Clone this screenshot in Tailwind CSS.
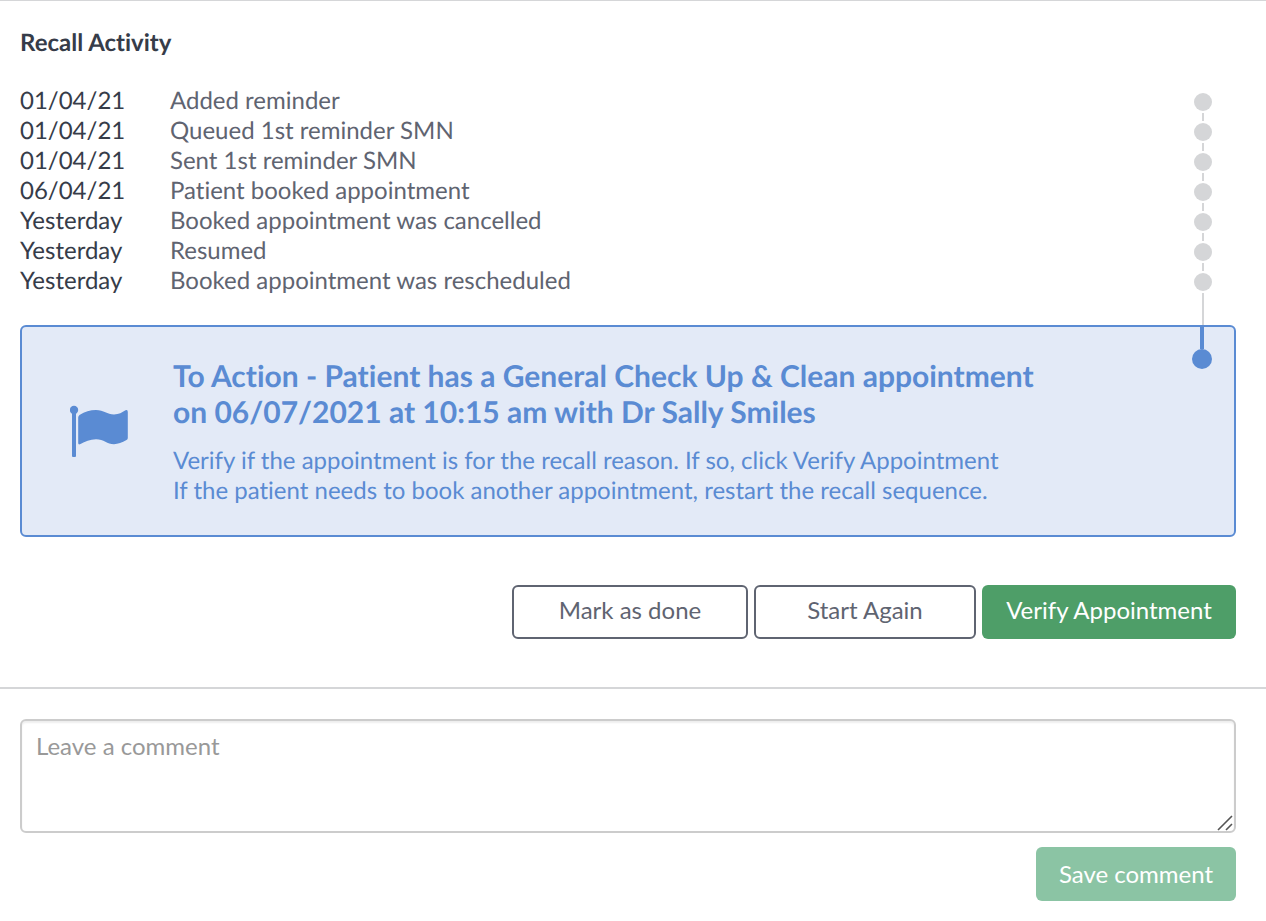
<!DOCTYPE html>
<html lang="en">
<head>
<meta charset="utf-8">
<meta name="viewport" content="width=device-width, initial-scale=1">
<title>Recall Activity</title>
<script src="https://cdn.jsdelivr.net/npm/@tailwindcss/browser@4"></script>
</head>
<body class="bg-white font-['Lato',sans-serif] text-2xl leading-[30px] text-[#5f6471] antialiased [font-variant-ligatures:none] [text-rendering:geometricPrecision]">
<main class="border-t border-[#d5d6d8]">
  <section class="pt-[27px] pr-[30px] pb-12 pl-5">
    <h1 class="font-bold text-[#363c49]">Recall Activity</h1>

    <div class="mt-7 flex">
      <ol class="min-w-0 flex-1 pb-[29px]">
        <li class="flex"><time class="w-[150px] shrink-0 text-[#363c49]">01/04/21</time><span>Added reminder</span></li>
        <li class="flex"><time class="w-[150px] shrink-0 text-[#363c49]">01/04/21</time><span>Queued 1st reminder SMN</span></li>
        <li class="flex"><time class="w-[150px] shrink-0 text-[#363c49]">01/04/21</time><span>Sent 1st reminder SMN</span></li>
        <li class="flex"><time class="w-[150px] shrink-0 text-[#363c49]">06/04/21</time><span>Patient booked appointment</span></li>
        <li class="flex"><time class="w-[150px] shrink-0 text-[#363c49]">Yesterday</time><span>Booked appointment was cancelled</span></li>
        <li class="flex"><time class="w-[150px] shrink-0 text-[#363c49]">Yesterday</time><span>Resumed</span></li>
        <li class="flex"><time class="w-[150px] shrink-0 text-[#363c49]">Yesterday</time><span>Booked appointment was rescheduled</span></li>
      </ol>
      <!-- Timeline -->
      <div class="mr-6 flex flex-col items-center gap-[2px] pt-[7px]" aria-hidden="true">
        <i class="size-[18px] rounded-full bg-[#d5d6d8]"></i><i class="h-2 w-[2px] bg-[#d5d6d8]"></i>
        <i class="size-[18px] rounded-full bg-[#d5d6d8]"></i><i class="h-2 w-[2px] bg-[#d5d6d8]"></i>
        <i class="size-[18px] rounded-full bg-[#d5d6d8]"></i><i class="h-2 w-[2px] bg-[#d5d6d8]"></i>
        <i class="size-[18px] rounded-full bg-[#d5d6d8]"></i><i class="h-2 w-[2px] bg-[#d5d6d8]"></i>
        <i class="size-[18px] rounded-full bg-[#d5d6d8]"></i><i class="h-2 w-[2px] bg-[#d5d6d8]"></i>
        <i class="size-[18px] rounded-full bg-[#d5d6d8]"></i><i class="h-2 w-[2px] bg-[#d5d6d8]"></i>
        <i class="size-[18px] rounded-full bg-[#d5d6d8]"></i><i class="w-[2px] flex-1 bg-[#d5d6d8]"></i>
      </div>
    </div>

    <div class="flex rounded-md border-2 border-[#5a8bd3] bg-[#e3eaf7] pr-[22px] pl-12 text-[#5a8bd3]">
      <svg class="mr-11 h-[52px] w-[59px] shrink-0 self-center" viewBox="0 0 59 52" fill="currentColor" aria-hidden="true">
        <circle cx="4" cy="5" r="4.2"/>
        <rect x="2" y="5" width="4" height="47" rx="1"/>
        <path d="M8.2 12.5Q8.200 11 9.500 10C15 6.800 20 5 26 5C34 5 37 9.500 44 9.500C49 9.500 52 7.500 55.500 5.300Q57.800 4.300 57.800 7V33Q57.800 34.300 56.500 35.100C52 37.800 48 39.200 44 39.200C37 39.200 34 34.200 26 34.200C20 34.200 15 36.400 10.500 39Q8.200 40.200 8.200 38Z"/>
      </svg>
      <div class="min-w-0 flex-1 pt-[31px] pb-[29px]">
        <h2 class="max-w-[880px] text-[30px] leading-9 font-bold">To Action - Patient has a General Check Up &amp; Clean appointment on 06/07/2021 at 10:15 am with Dr Sally Smiles</h2>
        <p class="mt-4">Verify if the appointment is for the recall reason. If so, click Verify Appointment<br>If the patient needs to book another appointment, restart the recall sequence.</p>
      </div>
      <div class="flex flex-col items-center" aria-hidden="true">
        <i class="h-[22px] w-1 bg-[#5a8bd3]"></i>
        <i class="size-5 rounded-full bg-[#5a8bd3]"></i>
      </div>
    </div>

    <div class="mt-12 flex justify-end gap-[6px]">
      <button type="button" class="h-[54px] w-[236px] rounded-md border-2 border-[#5f6471] bg-white pb-1">Mark as done</button>
      <button type="button" class="h-[54px] w-[222px] rounded-md border-2 border-[#5f6471] bg-white pb-1">Start Again</button>
      <button type="button" class="h-[54px] w-[254px] rounded-md bg-[#4e9e68] pb-1 text-white">Verify Appointment</button>
    </div>
  </section>

  <form class="border-t-2 border-[#d5d6d8] pt-[30px] pr-[30px] pb-5 pl-5">
    <div class="relative">
      <textarea aria-label="Leave a comment" placeholder="Leave a comment" class="block h-[114px] w-full resize-none rounded-md border-2 border-[#cccccc] bg-white px-[14px] py-[10px] shadow-[inset_0_2px_2px_rgba(0,0,0,0.07)] outline-none placeholder:text-[#999999]"></textarea>
      <svg class="pointer-events-none absolute right-[3px] bottom-[2px] size-4" viewBox="0 0 16 16" fill="none" stroke="#555" stroke-width="1.6" aria-hidden="true"><path d="M1 15 15 1M9 15l6-6"/></svg>
    </div>
    <div class="mt-[14px] flex justify-end">
      <button type="button" class="h-[54px] w-[200px] rounded-md bg-[#8bc4a4] text-white">Save comment</button>
    </div>
  </form>
</main>
</body>
</html>
